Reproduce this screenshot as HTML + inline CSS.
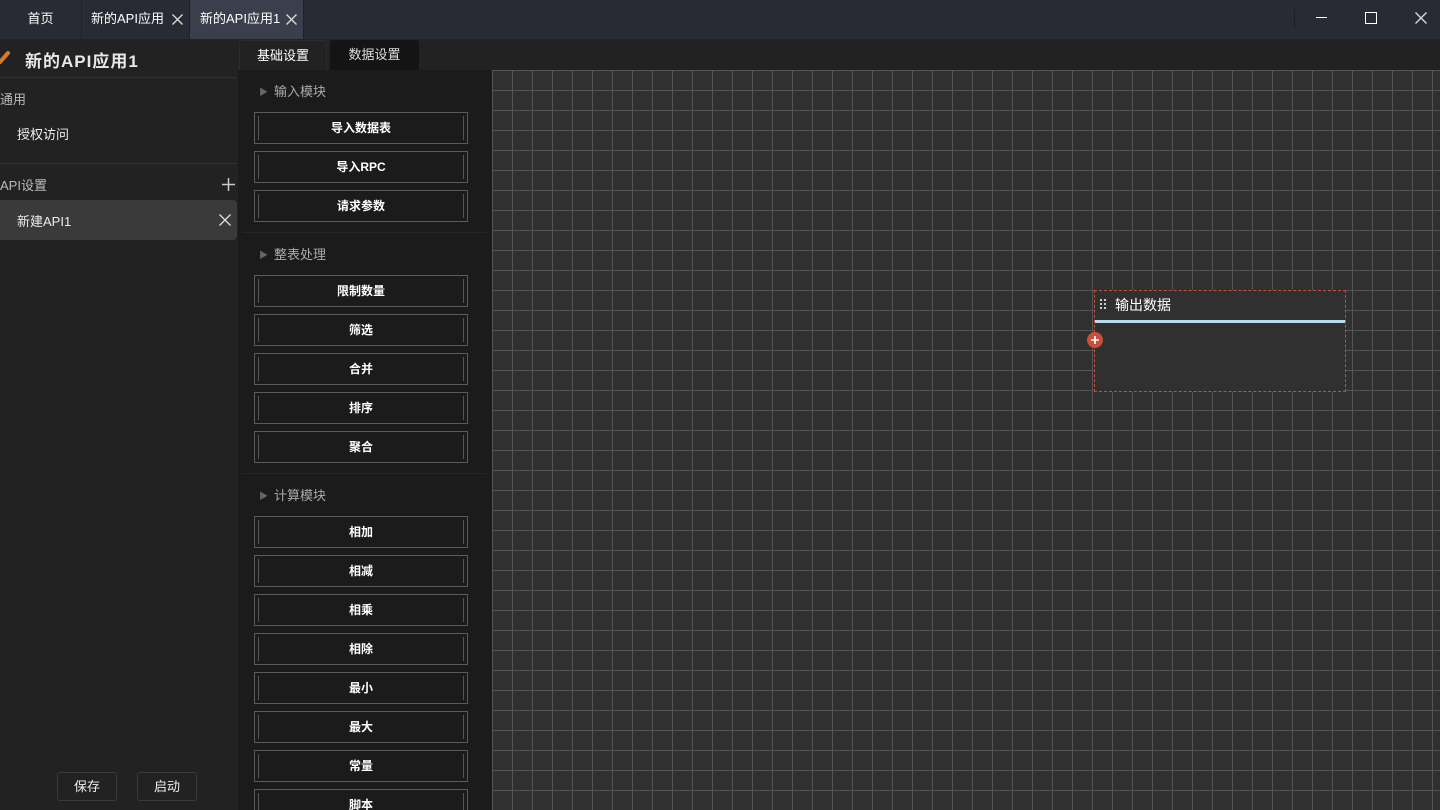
<!DOCTYPE html>
<html style="overflow:hidden;width:1440px;height:810px"><head><meta charset="utf-8"><style>
*{box-sizing:border-box;margin:0;padding:0}
body{width:1440px;height:810px;overflow:hidden;background:#222;font-family:"Liberation Sans","Noto Sans CJK SC",sans-serif;color:#ddd;font-size:13px;position:relative}
.a{position:absolute}
.tb{left:0;top:0;width:1440px;height:39px;background:#282b33}
.tab{top:0;height:39px;line-height:38px;color:#fff;font-size:13px;border-right:1px solid #1f2128}
.btn{left:254px;width:214px;height:32px;border:1px solid #5a5a5a;text-align:center;line-height:30px;color:#fff;font-size:12px;font-weight:bold}
.btn:before,.btn:after{content:"";position:absolute;top:3px;height:24px;width:1px;background:#555}
.btn:before{left:3px}.btn:after{right:3px}
.sh{left:259px;color:#aaa;font-size:13px}
.sh span{color:#666;font-size:9px;margin-right:6px;vertical-align:1px}
.grid{left:492px;top:70px;width:948px;height:740px;background-color:#303030;background-image:linear-gradient(#555 1px,transparent 1px),linear-gradient(90deg,#555 1px,transparent 1px);background-size:20px 20px}
</style></head><body>
<div class="a tb"></div>
<div class="a tab" style="left:0;width:82px;text-align:center">首页</div>
<div class="a tab" style="left:82px;width:108px;padding-left:9px">新的API应用<svg class="a" style="left:90px;top:14px" width="11" height="11"><path d="M0.5 0.5L10.5 10.5M10.5 0.5L0.5 10.5" stroke="#ddd" stroke-width="1.3"/></svg></div>
<div class="a tab" style="left:190px;width:114px;padding-left:10px;background:#3b3e4c">新的API应用1<svg class="a" style="left:96px;top:14px" width="11" height="11"><path d="M0.5 0.5L10.5 10.5M10.5 0.5L0.5 10.5" stroke="#ddd" stroke-width="1.3"/></svg></div>
<div class="a" style="left:1294px;top:9px;width:1px;height:20px;background:#1d1f25"></div>
<div class="a" style="left:1316px;top:17px;width:11px;height:1px;background:#fff"></div>
<div class="a" style="left:1365px;top:12px;width:12px;height:12px;border:1px solid #fff"></div>
<svg class="a" style="left:1415px;top:12px" width="12" height="12"><path d="M0.5 0.5L11.5 11.5M11.5 0.5L0.5 11.5" stroke="#ddd" stroke-width="1.3"/></svg>

<div class="a" style="left:0;top:39px;width:237px;height:771px;background:#222"></div>
<svg class="a" style="left:-2px;top:50px" width="14" height="14"><path d="M2 12L10 3" stroke="#d87a2a" stroke-width="4" stroke-linecap="round"/></svg>
<div class="a" style="left:25px;top:47px;font-size:17px;font-weight:bold;color:#e8e8e8;letter-spacing:1px">新的API应用1</div>
<div class="a" style="left:0;top:77px;width:237px;height:1px;background:#303030"></div>
<div class="a" style="left:0;top:89px;color:#bbb">通用</div>
<div class="a" style="left:17px;top:124px;color:#eee">授权访问</div>
<div class="a" style="left:0;top:163px;width:237px;height:1px;background:#303030"></div>
<div class="a" style="left:0;top:175px;color:#bbb">API设置</div>
<svg class="a" style="left:222px;top:178px" width="13" height="13"><path d="M6.5 0V13M0 6.5H13" stroke="#ccc" stroke-width="1.5"/></svg>
<div class="a" style="left:0;top:200px;width:237px;height:40px;background:#3a3a3a;border-radius:0 4px 4px 0"></div>
<div class="a" style="left:17px;top:211px;color:#eee">新建API1</div>
<svg class="a" style="left:219px;top:214px" width="12" height="12"><path d="M0.5 0.5L11.5 11.5M11.5 0.5L0.5 11.5" stroke="#ddd" stroke-width="1.3"/></svg>
<div class="a" style="left:57px;top:772px;width:60px;height:29px;border:1px solid #3a3a3a;border-radius:3px;text-align:center;line-height:27px;color:#eee">保存</div>
<div class="a" style="left:137px;top:772px;width:60px;height:29px;border:1px solid #3a3a3a;border-radius:3px;text-align:center;line-height:27px;color:#eee">启动</div>

<div class="a" style="left:238px;top:70px;width:254px;height:740px;background:#1b1b1b;overflow:hidden">
<div style="position:relative;left:-238px;top:-70px;width:492px;height:810px">
<div class="a sh" style="top:81px"><span>▶</span>输入模块</div>
<div class="a btn" style="top:112px">导入数据表</div>
<div class="a btn" style="top:151px">导入RPC</div>
<div class="a btn" style="top:190px">请求参数</div>
<div class="a" style="left:242px;top:232px;width:245px;height:1px;background:#262626"></div>
<div class="a sh" style="top:244px"><span>▶</span>整表处理</div>
<div class="a btn" style="top:275px">限制数量</div>
<div class="a btn" style="top:314px">筛选</div>
<div class="a btn" style="top:353px">合并</div>
<div class="a btn" style="top:392px">排序</div>
<div class="a btn" style="top:431px">聚合</div>
<div class="a" style="left:242px;top:473px;width:245px;height:1px;background:#262626"></div>
<div class="a sh" style="top:485px"><span>▶</span>计算模块</div>
<div class="a btn" style="top:516px">相加</div>
<div class="a btn" style="top:555px">相减</div>
<div class="a btn" style="top:594px">相乘</div>
<div class="a btn" style="top:633px">相除</div>
<div class="a btn" style="top:672px">最小</div>
<div class="a btn" style="top:711px">最大</div>
<div class="a btn" style="top:750px">常量</div>
<div class="a btn" style="top:789px">脚本</div>
</div></div>
<div class="a" style="left:239px;top:40px;width:88px;height:30px;background:#222;border:1px solid #2c2c2c;border-bottom:none;border-radius:3px 3px 0 0;text-align:center;line-height:30px;color:#fff">基础设置</div>
<div class="a" style="left:330px;top:40px;width:89px;height:30px;background:#141414;border-radius:3px 3px 0 0;text-align:center;line-height:30px;color:#ddd">数据设置</div>

<div class="a grid"></div>
<div class="a" style="left:1094px;top:290px;width:252px;height:102px;background:#303030;border:1px dashed #c8503a"></div>
<div class="a" style="left:1095px;top:320px;width:250px;height:3px;background:#b8dcef"></div>
<svg class="a" style="left:1100px;top:299px" width="6" height="10"><g fill="#ccc"><rect x="0" y="0" width="2" height="2"/><rect x="4" y="0" width="2" height="2"/><rect x="0" y="4" width="2" height="2"/><rect x="4" y="4" width="2" height="2"/><rect x="0" y="8" width="2" height="2"/><rect x="4" y="8" width="2" height="2"/></g></svg>
<div class="a" style="left:1115px;top:295px;color:#fff;font-size:14px">输出数据</div>
<div class="a" style="left:1087px;top:332px;width:16px;height:16px;border-radius:50%;background:#c8503a"></div>
<svg class="a" style="left:1091px;top:336px" width="8" height="8"><path d="M4 0V8M0 4H8" stroke="#fff" stroke-width="1.6"/></svg>
</body></html>
